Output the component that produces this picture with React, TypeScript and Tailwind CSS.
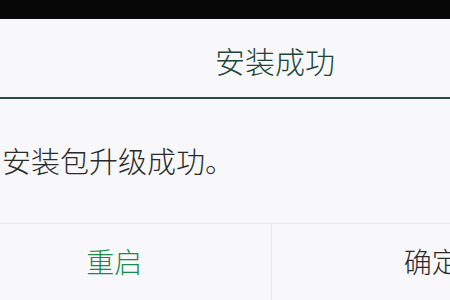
import React from 'react';

const font = { fontFamily: '"Noto Sans CJK SC", "Noto Sans", sans-serif' };

export default function App() {
    return (
        <div className="w-[450px] h-[300px] overflow-hidden bg-[#f8f8fa] flex flex-col" style={font}>
            {/* status strip */}
            <div className="h-[19px] bg-[#070707] shrink-0" />

            <div className="-ml-[42px] w-[630px] flex flex-col flex-1">
                {/* Title */}
                <div className="h-[78px] flex items-center justify-center pt-[4px] pl-[4px]">
                    <h1 className="text-[30px] leading-none font-light text-[#1d4638]">安装成功</h1>
                </div>
                <div className="h-[2px] bg-[#2b4a40]" />

                {/* Message */}
                <div className="h-[124px] pl-[44px] pt-[43px]">
                    <p className="text-[29px] leading-[36px] font-light text-[#2a2a2c]">安装包升级成功。</p>
                </div>

                {/* Buttons */}
                <div className="flex flex-1 border-t border-[#e8e8ec]">
                    <button className="flex-1 flex items-center justify-center pb-[3px] text-[28px] font-light text-[#1a8c4a] border-r border-[#e8e8ec]">
                        重启
                    </button>
                    <button className="flex-1 flex items-center justify-center pb-[3px] pl-[4px] text-[28px] font-light text-[#2a2a2c]">
                        确定
                    </button>
                </div>
            </div>
        </div>
    );
}
